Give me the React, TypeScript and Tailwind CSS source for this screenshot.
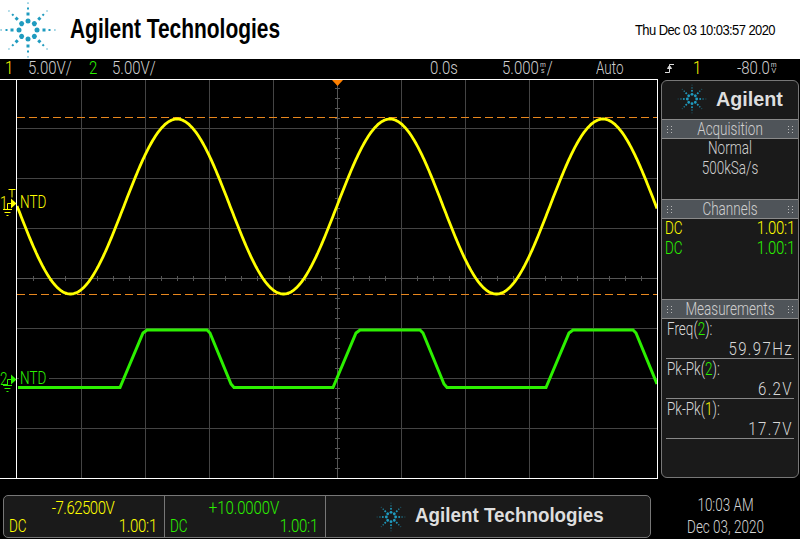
import React from 'react';

// Agilent starburst, drawn around (0,0) with a radius of about 27 units
const AXES = [0, 45, 90, 135, 180, 225, 270, 315];

const Star: React.FC<{ size: number; dotScale?: number; className?: string }> = ({ size, dotScale = 1, className }) => (
  <svg width={size} height={size} viewBox="-29 -29 58 58" fill="#1f9bbf" className={className}>
    {AXES.map((deg) => (
      <g key={deg} transform={`rotate(${deg})`}>
        <circle cx={0} cy={-9} r={2.5 * dotScale} />
        <rect x={-1.5 * dotScale} y={-17.5} width={3 * dotScale} height={3 * dotScale} />
        <rect x={-1 * dotScale} y={-22.5} width={2 * dotScale} height={2 * dotScale} />
        <rect x={-0.6 * dotScale} y={-27.5} width={1.2 * dotScale} height={1.2 * dotScale} />
      </g>
    ))}
  </svg>
);

// The scope's font is tall and narrow: leaf text gets stretched upward
const num = "inline-block align-top font-['Roboto'] font-light text-[15px] leading-[15px] whitespace-nowrap scale-y-[1.18]";
const word = "inline-block align-top font-['Roboto'] font-light text-[13.5px] leading-[15px] whitespace-nowrap scale-y-[1.3]";

const Grip: React.FC = () => (
  <div className="grid grid-cols-2 gap-x-[3px] gap-y-[2px]">
    {[0, 1, 2, 3, 4, 5].map((i) => (
      <span key={i} className="w-px h-px bg-[#b8b8b8]" />
    ))}
  </div>
);

const SectionHead: React.FC<{ title: string }> = ({ title }) => (
  <div className="h-[20px] flex items-center justify-between px-[5px] bg-[#4f5459] border-y border-[#8a8a8a] text-[#cfcfcf]">
    <Grip />
    <span className={word}>{title}</span>
    <Grip />
  </div>
);

const Stacked: React.FC<{ top: string; bottom: string }> = ({ top, bottom }) => (
  <span className="inline-flex flex-col items-center font-['Liberation_Sans'] text-[7px] leading-[6px] mx-px">
    <span>{top}</span>
    <span>{bottom}</span>
  </span>
);

const GRID_X = [81, 145, 209, 273, 401, 465, 529, 593];
const GRID_Y = [128, 178, 228, 328, 378, 428];

const yellowPoints = Array.from({ length: 641 }, (_, i) => {
  const x = 17 + i;
  return `${x},${(206.5 - 87.5 * Math.cos((2 * Math.PI * (x - 177)) / 213)).toFixed(1)}`;
}).join(' ');

const greenPoints =
  '18,387.5 120,387.5 124,378 143,333 147,330 207,330 210,333 231,384 234,387.5 333,387.5 337,378 356,333 360,330 420,330 423,333 444,384 447,387.5 546,387.5 550,378 569,333 573,330 633,330 636,333 657,384';

const Waveforms: React.FC = () => {
  const xTicks: number[] = [];
  for (let x = 33; x < 657; x += 16) xTicks.push(x);
  const yTicks: number[] = [];
  for (let y = 88; y < 478; y += 10) yTicks.push(y);
  return (
    <svg width={640} height={398} viewBox="17 80 640 398" className="block">
      {GRID_X.map((x) => (
        <line key={x} x1={x + 0.5} x2={x + 0.5} y1={80} y2={478} stroke="#444" />
      ))}
      {GRID_Y.map((y) => (
        <line key={y} x1={17} x2={657} y1={y + 0.5} y2={y + 0.5} stroke="#444" />
      ))}
      <line x1={337.5} x2={337.5} y1={80} y2={478} stroke="#555" />
      <line x1={17} x2={657} y1={278.5} y2={278.5} stroke="#555" />
      {xTicks.map((x) => (
        <line key={x} x1={x + 0.5} x2={x + 0.5} y1={276} y2={281} stroke="#555" />
      ))}
      {yTicks.map((y) => (
        <line key={y} x1={335} x2={340} y1={y + 0.5} y2={y + 0.5} stroke="#555" />
      ))}
      <polygon points="332,80 343,80 337.5,86" fill="#ff8000" />
      <line x1={17} x2={657} y1={117.5} y2={117.5} stroke="#e8871e" strokeDasharray="8 4" />
      <line x1={17} x2={657} y1={294.5} y2={294.5} stroke="#e8871e" strokeDasharray="8 4" />
      <polyline points={yellowPoints} fill="none" stroke="#ffff00" strokeWidth={2.8} />
      <polyline points={greenPoints} fill="none" stroke="#2cf000" strokeWidth={3} />
    </svg>
  );
};

const ChannelMark: React.FC<{ label: string; color: string; showT?: boolean; className: string }> = ({
  label,
  color,
  showT,
  className,
}) => (
  <div className={`absolute left-0 flex items-start ${className}`}>
    <svg width={18} height={30} viewBox="0 0 18 30" fill="none" stroke={color} className="block">
      {showT && <path d="M8.5 1.5h7M12 1.5v8" />}
      <path d="M7.5 21v-5.5H12" />
      <polygon points="11,10.5 16.5,15.5 11,20.5" fill={color} stroke="none" />
      <path d="M3 21.5h9M4.5 24.5h6M6.5 27.5h2" />
    </svg>
    <span className={`${word} absolute left-0 top-[8px]`} style={{ color }}>
      {label}
    </span>
    <div className="bg-black pl-px pr-[3px] mt-[8px] ml-px h-[12px] flex items-center" style={{ color }}>
      <span className={word}>NTD</span>
    </div>
  </div>
);

const Measurement: React.FC<{ label: string; chan: string; chanColor: string; value: string }> = ({
  label,
  chan,
  chanColor,
  value,
}) => (
  <div className="h-[40px] mx-[4px] border-b border-[#888] text-[#d8d8d8] flex flex-col items-stretch pt-[3px]">
    <div className="pl-px h-[15px]">
      <span className={word}>
        {label}(<span className={chanColor}>{chan}</span>):
      </span>
    </div>
    <div className="text-right pr-px mt-[5px] h-[15px]">
      <span className={`${num} tracking-[1.4px]`}>{value}</span>
    </div>
  </div>
);

const BottomCell: React.FC<{ value: string; colorClass: string; valueTrack: string }> = ({
  value,
  colorClass,
  valueTrack,
}) => (
  <div className={`w-[161px] border-r border-[#777] h-full flex flex-col pl-[5px] pr-[7px] pt-[5px] ${colorClass}`}>
    <div className="text-center h-[15px]">
      <span className={`${num} ${valueTrack}`}>{value}</span>
    </div>
    <div className="flex justify-between mt-[3px]">
      <span className={word}>DC</span>
      <span className={`${num} tracking-[-0.3px]`}>1.00:1</span>
    </div>
  </div>
);

export default function App() {
  return (
    <div className="w-[800px] h-[539px] bg-black overflow-hidden flex flex-col leading-[15px]">
      {/* Top banner */}
      <div className="h-[59px] bg-white flex items-center shrink-0">
        <Star size={58} className="ml-[-1px]" />
        <span className="ml-[13px] font-['Liberation_Sans'] font-bold text-[27px] text-black origin-left scale-x-[0.775] whitespace-nowrap">
          Agilent Technologies
        </span>
        <span className="ml-auto mr-[25px] font-['Liberation_Sans'] text-[13px] text-black tracking-[-0.58px] scale-y-[1.18] whitespace-nowrap">
          Thu Dec 03 10:03:57 2020
        </span>
      </div>

      {/* Status strip */}
      <div className="h-[20px] shrink-0 flex items-center pb-[2px] text-[#cfcfcf]">
        <span className={`${num} ml-[5px] w-[23px] text-[#ffff00]`}>1</span>
        <span className={`${num} w-[61px]`}>5.00V/</span>
        <span className={`${num} w-[23px] text-[#2cf000]`}>2</span>
        <span className={`${num} w-[318px]`}>5.00V/</span>
        <span className={`${num} w-[72px]`}>0.0s</span>
        <span className="w-[94px] flex items-center">
          <span className={num}>5.000</span>
          <Stacked top="m" bottom="s" />
          <span className={num}>/</span>
        </span>
        <span className={`${word} w-[69px]`}>Auto</span>
        <svg width={9} height={11} viewBox="0 0 9 11" fill="none" stroke="#dcdcdc" className="shrink-0">
          <path d="M0 9.5h4.5v-8H9" />
          <path d="M2.5 5.5 4.5 2.5 6.5 5.5z" fill="#dcdcdc" />
        </svg>
        <span className={`${num} ml-[19px] w-[44px] text-[#ffff00]`}>1</span>
        <span className="flex items-center">
          <span className={num}>-80.0</span>
          <Stacked top="m" bottom="V" />
        </span>
      </div>

      {/* Graticule and side panel */}
      <div className="h-[400px] shrink-0 flex">
        <div className="relative w-[658px] border-y border-white flex">
          <div className="w-[16px] shrink-0" />
          <div className="border-x border-white">
            <Waveforms />
          </div>
          <ChannelMark label="1" color="#ffff00" showT className="top-[108px]" />
          <ChannelMark label="2" color="#2cf000" className="top-[284px]" />
        </div>
        <div className="ml-[3px] my-px w-[138px] bg-[#1a1a1a] border border-[#777] rounded-[6px] overflow-hidden flex flex-col">
          <div className="h-[38px] flex items-center pl-[15px] pb-[3px] shrink-0">
            <Star size={30} dotScale={1.1} />
            <span className="ml-[9px] font-['Liberation_Sans'] font-bold text-[21px] text-[#dedede] origin-left whitespace-nowrap scale-x-[0.94]">
              Agilent
            </span>
          </div>
          <SectionHead title="Acquisition" />
          <div className="h-[60px] text-[#d0d0d0] flex flex-col items-center pt-[2px] gap-[5px]">
            <span className={word}>Normal</span>
            <span className={word}>500kSa/s</span>
          </div>
          <SectionHead title="Channels" />
          <div className="h-[80px] px-[3px] pt-[2px] flex flex-col gap-[5px]">
            <div className="flex justify-between text-[#ffff00]">
              <span className={word}>DC</span>
              <span className={`${num} tracking-[-0.3px]`}>1.00:1</span>
            </div>
            <div className="flex justify-between text-[#2cf000]">
              <span className={word}>DC</span>
              <span className={`${num} tracking-[-0.3px]`}>1.00:1</span>
            </div>
          </div>
          <SectionHead title="Measurements" />
          <Measurement label="Freq" chan="2" chanColor="text-[#2cf000]" value="59.97Hz" />
          <Measurement label="Pk-Pk" chan="2" chanColor="text-[#2cf000]" value="6.2V" />
          <Measurement label="Pk-Pk" chan="1" chanColor="text-[#ffff00]" value="17.7V" />
        </div>
      </div>

      {/* Bottom bar */}
      <div className="flex shrink-0 mt-[16px]">
        <div className="ml-[3px] w-[648px] h-[43px] bg-[#1a1a1a] border border-[#777] rounded-[5px] overflow-hidden flex items-center">
          <BottomCell value="-7.62500V" colorClass="text-[#ffff00]" valueTrack="tracking-[-0.5px]" />
          <BottomCell value="+10.0000V" colorClass="text-[#2cf000]" valueTrack="tracking-[-0.1px]" />
          <Star size={30} dotScale={1.1} className="ml-[50px]" />
          <span className="ml-[9px] pb-[2px] font-['Liberation_Sans'] font-bold text-[20px] text-[#dedede] origin-left scale-x-[0.94] whitespace-nowrap">
            Agilent Technologies
          </span>
        </div>
        <div className="flex-1 text-[#d4d4d4] flex flex-col items-center pt-[3px] gap-[7px]">
          <span className={word}>10:03 AM</span>
          <span className={word}>Dec 03, 2020</span>
        </div>
      </div>
    </div>
  );
}
